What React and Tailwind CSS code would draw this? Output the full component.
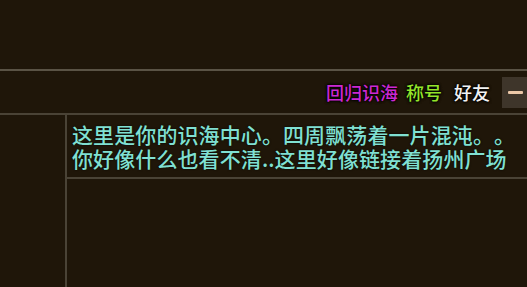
import React from "react";

export default function App() {
  const font = { fontFamily: '"Noto Sans CJK SC", "Noto Sans", sans-serif' };
  return (
    <div className="w-[527px] h-[287px] bg-[#1f1609] overflow-hidden flex flex-col [text-spacing-trim:space-all]" style={font}>
      <div className="h-[69px] shrink-0" />
      <div className="h-[2px] bg-[#5a5345] shrink-0" />
      <div className="h-[42px] shrink-0 flex items-center justify-end text-[18px] leading-none font-medium">
        <span className="text-[#cc28d2] [text-shadow:0_0_3px_#000,0_0_3px_#000,0_0_2px_#000]">回归识海</span>
        <span className="ml-[8px] text-[#94e42a] [text-shadow:0_0_3px_#000,0_0_3px_#000,0_0_2px_#000]">称号</span>
        <span className="ml-[12px] text-[#f2f2f2] [text-shadow:0_0_3px_#000,0_0_3px_#000,0_0_2px_#000]">好友</span>
        <div className="ml-[12px] w-[25px] h-[31px] bg-[#3e352a] flex items-center pl-[6px]">
          <div className="w-[15px] h-[3px] bg-[#ecc8a8] rounded-[1px]" />
        </div>
      </div>
      <div className="h-[2px] bg-[#4a4336] shrink-0" />
      <div className="flex-1 flex">
        <div className="w-[65px] shrink-0" />
        <div className="w-[2px] bg-[#4a4336] shrink-0" />
        <div className="flex-1 flex flex-col">
          <div className="pl-[5px] pt-[7px] pb-[7px] text-[21px] leading-[24px] tracking-[0.1px] font-medium text-[#80e0d2] whitespace-nowrap [text-shadow:0_0_2px_#000]">
            <div>这里是你的识海中心。四周飘荡着一片混沌。。</div>
            <div>你好像什么也看不清..这里好像链接着扬州广场</div>
          </div>
          <div className="h-[2px] bg-[#4a4336]" />
        </div>
      </div>
    </div>
  );
}
